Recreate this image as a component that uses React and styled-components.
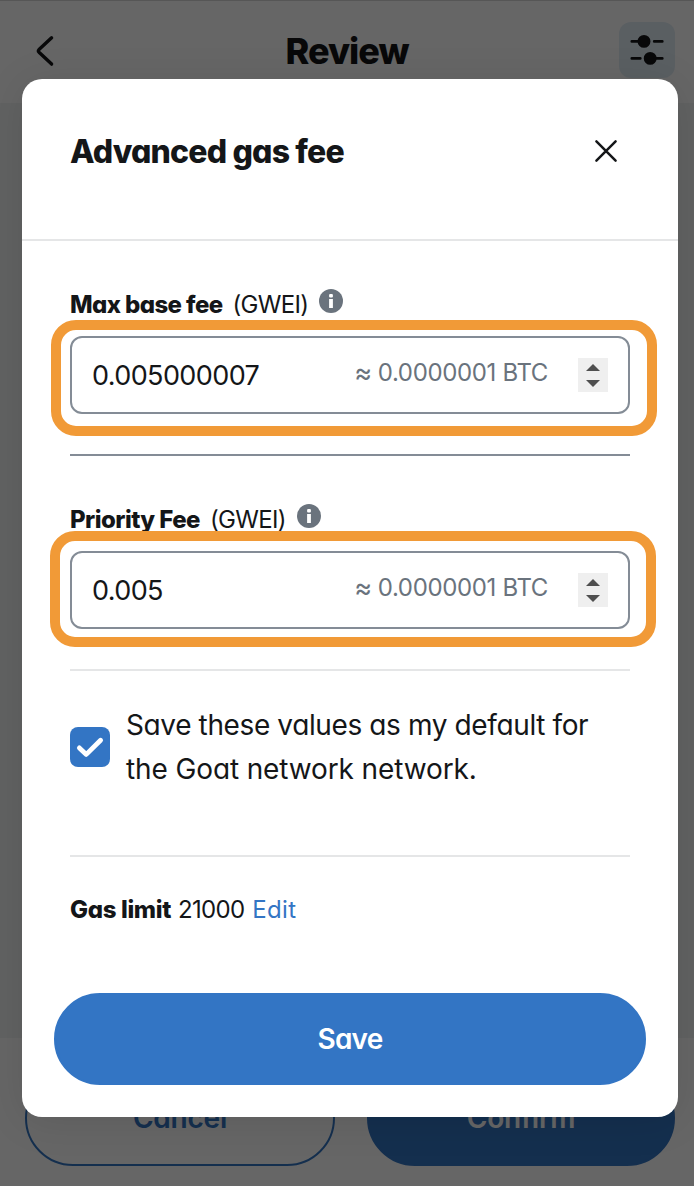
import React from "react";
import styled, { createGlobalStyle } from "styled-components";

const GlobalStyle = createGlobalStyle`
  * { box-sizing: border-box; }
  body { margin: 0; }
  button { font: inherit; border: 0; padding: 0; background: none; cursor: pointer; }
`;

const Page = styled.div`
  position: relative;
  display: flex;
  flex-direction: column;
  height: 1186px;
  overflow: hidden;
  background: #f2f4f6;
  color: #141618;
  font-family: Inter, "Liberation Sans", sans-serif;
  font-feature-settings: "cv11" 1;
`;

const TopBar = styled.header`
  display: flex;
  align-items: center;
  justify-content: space-between;
  height: 103px;
  padding: 0 19px 4px 25px;
  background: #fff;
  border-top: 1px solid #d8d8d8;
`;

const IconButton = styled.button`
  display: grid;
  place-items: center;
  width: ${(p) => p.$size}px;
  height: ${(p) => p.$size}px;
  border-radius: 12px;
  background: ${(p) => p.$bg || "transparent"};
`;

const PageTitle = styled.h1`
  margin: 2px 0 0 10px;
  font-size: 36px;
  font-weight: 800;
  letter-spacing: -1px;
`;

const Footer = styled.footer`
  display: grid;
  grid-template-columns: 310px 308px;
  gap: 32px;
  height: 148px;
  margin-top: auto;
  padding: 32px 19px 20px 25px;
  background: #fff;
`;

const PillButton = styled.button`
  height: ${(p) => p.$height || 96}px;
  padding-bottom: ${(p) => (p.$height ? 1 : 0)}px;
  border-radius: 48px;
  border: 2px solid #3375c4;
  background: ${(p) => (p.$outline ? "#fff" : "#3375c4")};
  color: ${(p) => (p.$outline ? "#3375c4" : "#fff")};
  font-size: 28px;
  font-weight: 600;
  letter-spacing: ${(p) => p.$spacing || 0}px;
`;

const Overlay = styled.div`
  position: absolute;
  inset: 0;
  padding: 79px 16px 69px 22px;
  background: rgba(0, 0, 0, 0.6);
`;

const Modal = styled.section`
  height: 1038px;
  border-radius: 20px;
  background: #fff;
  box-shadow: 0 4px 40px rgba(0, 0, 0, 0.1);
`;

const ModalHeader = styled.header`
  display: flex;
  align-items: center;
  justify-content: space-between;
  height: 162px;
  padding: 0 48px 17px;
  border-bottom: 2px solid #e5e6e7;
`;

const ModalTitle = styled.h2`
  margin: 2px 0 0;
  font-size: 32px;
  font-weight: 800;
  letter-spacing: -0.83px;
`;

const Body = styled.div`
  padding: 0 48px;
`;

const Field = styled.div`
  padding-top: 46px;
`;

const FieldLabel = styled.div`
  display: flex;
  align-items: center;
  height: 36px;
  margin-bottom: 13px;
  font-size: 24px;
  line-height: 36px;

  svg { margin: 0 0 8px 11px; }
`;

const Strong = styled.span`
  font-weight: 800;
  letter-spacing: ${(p) => p.$spacing}px;
`;

const Unit = styled.span`
  margin-left: 10px;
  letter-spacing: -0.7px;
`;

const InputBox = styled.div`
  position: relative;
  display: flex;
  align-items: center;
  height: 78px;
  padding: 0 20px 0 20px;
  border: 2px solid #848c96;
  border-radius: 12px;
`;

const Highlight = styled.div`
  position: absolute;
  top: ${(p) => p.$top}px;
  left: ${(p) => p.$left}px;
  width: 606px;
  height: 116px;
  border: 10px solid #f19a37;
  border-radius: 25px;
`;

const Value = styled.span`
  flex: 1;
  font-size: 27px;
  letter-spacing: -0.6px;
`;

const Converted = styled.span`
  display: flex;
  align-items: center;
  gap: 6px;
  margin-right: 30px;
  padding-bottom: 5px;
  color: #6a737d;
  font-size: 24px;
  line-height: 29px;
  letter-spacing: -0.35px;
`;

const Approx = styled.span`
  font-size: 27px;
`;

const Stepper = styled.span`
  display: grid;
  width: 30px;
  height: 34px;
  background: #efefef;
`;

const Divider = styled.hr`
  height: 2px;
  margin: ${(p) => p.$top}px 0 0;
  border: 0;
  background: ${(p) => (p.$dark ? "#848c96" : "#e5e6e7")};
`;

const DefaultRow = styled.label`
  display: flex;
  align-items: center;
  gap: 16px;
  margin-top: 32px;
  font-size: 28px;
  line-height: 44px;
`;

const Checkbox = styled.span`
  display: grid;
  width: 40px;
  height: 40px;
  border-radius: 8px;
  background: #3375c4;
`;

const Line = styled.span`
  display: block;
  white-space: nowrap;
  letter-spacing: ${(p) => p.$spacing}px;
`;

const GasLimit = styled.div`
  display: flex;
  margin-top: 35px;
  font-size: 24px;
  line-height: 36px;
`;

const GasValue = styled.span`
  margin-left: 7px;
  letter-spacing: -0.7px;
`;

const EditLink = styled.button`
  margin-left: 8px;
  color: #3375c4;
  letter-spacing: 0.3px;
`;

const ModalFooter = styled.div`
  display: grid;
  padding: 65px 32px 32px;
`;

const InfoIcon = () => (
  <svg width="24" height="24" viewBox="0 0 24 24">
    <circle cx="12" cy="12" r="12" fill="#6a737d" />
    <rect x="10.1" y="5" width="3.8" height="3.6" rx="1" fill="#fff" />
    <rect x="10.1" y="10" width="3.8" height="9" fill="#fff" />
  </svg>
);

const StepperArrows = () => (
  <svg width="30" height="34" viewBox="0 0 30 34" fill="#4f4f4f">
    <path d="M8 13L15 6l7 7z" />
    <path d="M8 22h14l-7 7z" />
  </svg>
);

function FeeField({ label, spacing, value, top, left }) {
  return (
    <Field>
      <FieldLabel>
        <Strong $spacing={spacing}>{label}</Strong>
        <Unit>(GWEI)</Unit>
        <InfoIcon />
      </FieldLabel>
      <InputBox>
        <Value>{value}</Value>
        <Converted>
          <Approx>≈</Approx>
          <span>0.0000001 BTC</span>
        </Converted>
        <Stepper>
          <StepperArrows />
        </Stepper>
        <Highlight $top={top} $left={left} />
      </InputBox>
    </Field>
  );
}

export default function App() {
  return (
    <Page>
      <GlobalStyle />
      <TopBar>
        <IconButton $size={40} aria-label="Back">
          <svg width="40" height="40" viewBox="0 0 40 40" fill="none" stroke="#141618" strokeWidth="3.4" strokeLinecap="round" strokeLinejoin="round">
            <path d="M26.6 7.8L14 19.6q-1.2 1.3 0 2.6l12.6 11.9" />
          </svg>
        </IconButton>
        <PageTitle>Review</PageTitle>
        <IconButton $size={56} $bg="#e2edf6" aria-label="Advanced settings">
          <svg width="56" height="56" viewBox="0 0 56 56" fill="#141618" stroke="#141618" strokeWidth="2.7" strokeLinecap="round">
            <path d="M12.8 19.4h8M35.2 19.4h8.1M12.8 36.4h8.5M35 36.4h8.3" />
            <circle cx="25" cy="19.4" r="5.1" />
            <circle cx="31.2" cy="36.4" r="5.1" />
          </svg>
        </IconButton>
      </TopBar>
      <Footer>
        <PillButton $outline $spacing={-0.2}>Cancel</PillButton>
        <PillButton $spacing={-0.2}>Confirm</PillButton>
      </Footer>
      <Overlay>
        <Modal>
          <ModalHeader>
            <ModalTitle>Advanced gas fee</ModalTitle>
            <IconButton $size={48} aria-label="Close">
              <svg width="48" height="48" viewBox="0 0 48 48" fill="none" stroke="#141618" strokeWidth="2.5" strokeLinecap="round">
                <path d="M14.4 14.4l19.2 19.2M33.6 14.4L14.4 33.6" />
              </svg>
            </IconButton>
          </ModalHeader>
          <Body>
            <FeeField label="Max base fee" spacing={-0.6} value="0.005000007" top={-18} left={-21} />
            <Divider $top={40} $dark />
            <FeeField label="Priority Fee" spacing={-0.55} value="0.005" top={-22} left={-22} />
            <Divider $top={40} />
            <DefaultRow>
              <Checkbox>
                <svg width="40" height="40" viewBox="0 0 40 40" fill="none" stroke="#fff" strokeWidth="4.8" strokeLinecap="round" strokeLinejoin="round">
                  <path d="M9.4 20.9l6.9 6.5L30.6 13.2" />
                </svg>
              </Checkbox>
              <span>
                <Line $spacing={-0.38}>Save these values as my default for</Line>
                <Line $spacing={-0.12}>the Goat network network.</Line>
              </span>
            </DefaultRow>
            <Divider $top={64} />
            <GasLimit>
              <Strong $spacing={-0.35}>Gas limit</Strong>
              <GasValue>21000</GasValue>
              <EditLink>Edit</EditLink>
            </GasLimit>
          </Body>
          <ModalFooter>
            <PillButton $height={92} $spacing={-0.8}>Save</PillButton>
          </ModalFooter>
        </Modal>
      </Overlay>
    </Page>
  );
}
